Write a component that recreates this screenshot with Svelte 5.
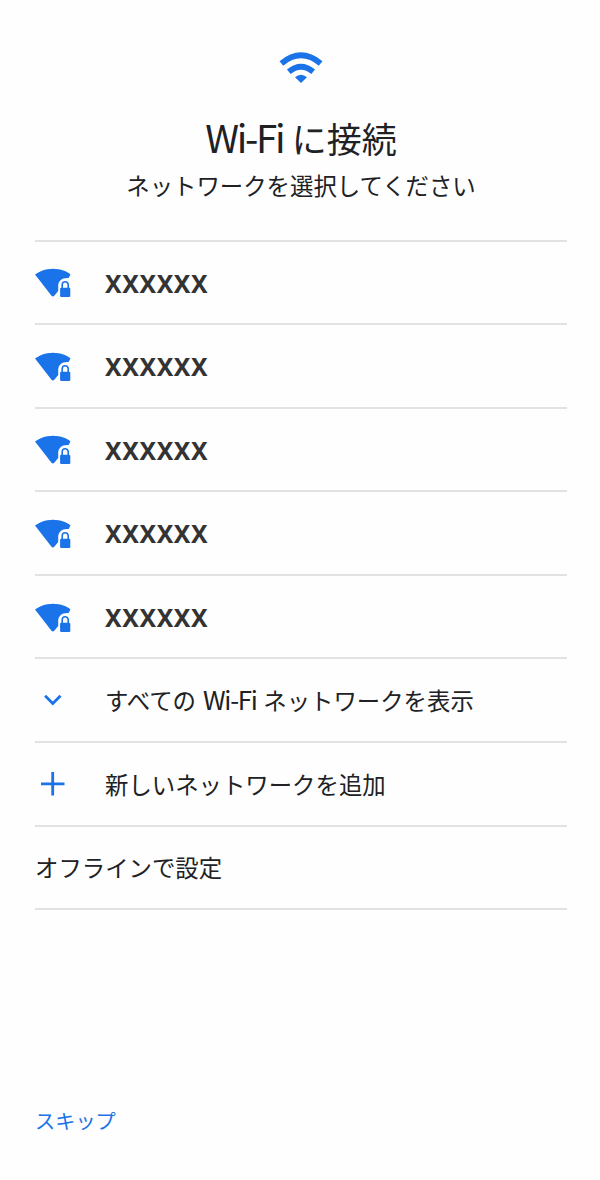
<script lang="ts">
	interface Network {
		ssid: string;
	}

	const networks: Network[] = Array.from({ length: 5 }, () => ({ ssid: 'XXXXXX' }));
</script>

<main class="setup">
	<header>
		<svg class="wifi" width="44" height="32" viewBox="0 0 44 32" aria-hidden="true">
			<path d="M2.4 11.4Q22 -4.8 41.6 11.4" fill="none" stroke="currentColor" stroke-width="5.8" />
			<path d="M9.8 19.7Q22 9.7 34.2 19.7" fill="none" stroke="currentColor" stroke-width="5.8" />
			<path d="M16 25.2Q22 20.2 28 25.2L22 31Z" fill="currentColor" />
		</svg>
		<h1><span class="latin">Wi-Fi</span> に接続</h1>
		<p>ネットワークを選択してください</p>
	</header>

	<ul>
		{#each networks as network}
			<li>
				<svg class="icon" width="36" height="32" viewBox="0 0 36 32" aria-hidden="true">
					<path d="M0 7.6C4 4.6 10 1.8 18 1.8S32 4.6 35.5 7.4L33.6 11.1C27 10.5 23.2 14 23.2 19V24L19.3 28.8Q17.9 30.3 16.5 28.8Z" fill="currentColor" />
					<rect x="25.1" y="20.7" width="10.2" height="9.2" rx="1.2" fill="currentColor" />
					<path d="M27.2 21V17.8a3 3 0 0 1 6 0V21" fill="none" stroke="currentColor" stroke-width="1.6" />
				</svg>
				<span class="ssid">{network.ssid}</span>
			</li>
		{/each}
		<li>
			<svg class="icon" width="36" height="32" viewBox="0 0 36 32" aria-hidden="true">
				<path d="M10.1 10.8L17.8 18.5L25.5 10.8" fill="none" stroke="currentColor" stroke-width="2.8" />
			</svg>
			<span class="label">すべての <span class="latin">Wi-Fi</span> ネットワークを表示</span>
		</li>
		<li>
			<svg class="icon" width="36" height="32" viewBox="0 0 36 32" aria-hidden="true">
				<path d="M6 14.8H29.5M17.7 3.1V26.6" fill="none" stroke="currentColor" stroke-width="2.8" />
			</svg>
			<span class="label">新しいネットワークを追加</span>
		</li>
		<li><span class="label">オフラインで設定</span></li>
	</ul>

	<button type="button">スキップ</button>
</main>

<style>
	:global(body) {
		background: #fefefe;
	}

	.setup {
		box-sizing: border-box;
		display: flex;
		flex-direction: column;
		align-items: flex-start;
		width: 600px;
		height: 1180px;
		padding: 52px 33px 41px 35px;
		font-family: 'Noto Sans CJK JP', sans-serif;
		color: #202124;
	}

	header {
		display: flex;
		flex-direction: column;
		align-items: center;
		width: 100%;
		height: 187.5px;
	}

	.wifi,
	.icon {
		flex-shrink: 0;
		color: #1a73e8;
	}

	h1 {
		margin: 28px 0 0;
		font-size: 35px;
		font-weight: 400;
		line-height: 52px;
		white-space: nowrap;
	}

	.latin {
		font-size: 1.1em;
		line-height: 1;
		letter-spacing: -0.06em;
		margin-right: 0.02em;
	}

	p {
		margin: 7px 0 0;
		font-size: 23.4px;
		line-height: 28px;
		white-space: nowrap;
	}

	ul {
		width: 100%;
		margin: 0;
		padding: 0;
		border-top: 2px solid #e2e2e2;
		list-style: none;
	}

	li {
		box-sizing: border-box;
		display: flex;
		align-items: center;
		gap: 34px;
		height: 83.6px;
		padding-top: 2px;
		border-bottom: 2px solid #e2e2e2;
	}

	.label {
		margin-top: -2.5px;
		font-size: 23.4px;
		line-height: 34px;
		white-space: nowrap;
	}

	.label .latin {
		margin: 0 0.06em 0 0.07em;
		letter-spacing: -0.05em;
	}

	.ssid {
		margin-top: -1.5px;
		font-family: 'Noto Sans', sans-serif;
		font-size: 24.8px;
		font-weight: 700;
		line-height: 32px;
		letter-spacing: 0.6px;
		color: #333;
	}

	button {
		margin-top: auto;
		padding: 0;
		border: 0;
		background: none;
		font: inherit;
		font-size: 20.2px;
		line-height: 36px;
		color: #1a73e8;
	}
</style>
